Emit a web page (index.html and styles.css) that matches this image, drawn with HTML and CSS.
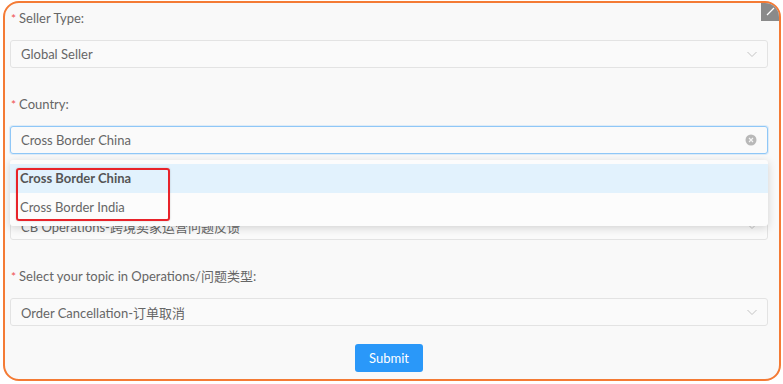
FILE: index.html
```html
<!DOCTYPE html>
<html lang="en">
<head>
    <meta charset="UTF-8">
    <meta name="viewport" content="width=device-width, initial-scale=1.0">
    <title>Operations Form</title>
    <link rel="stylesheet" href="styles.css">
</head>
<body>
    <div class="frame">
        <span class="corner-badge">
            <svg width="18" height="18" viewBox="0 0 18 18"><path d="M6 12 L13 5" stroke="#fff" stroke-width="1.2"/></svg>
        </span>
        <form class="form">
            <div class="form-item">
                <label class="form-label"><span class="req">*</span>Seller Type:</label>
                <div class="select">
                    <span class="select-value">Global Seller</span>
                    <svg class="arrow" width="12" height="12" viewBox="0 0 12 12"><path d="M1.5 4 L6 8.5 L10.5 4" fill="none" stroke="#c4c4c4" stroke-width="1"/></svg>
                </div>
            </div>
            <div class="form-item country">
                <label class="form-label"><span class="req">*</span>Country:</label>
                <div class="select focused">
                    <span class="select-value">Cross Border China</span>
                    <svg class="clear" width="12" height="12" viewBox="0 0 12 12"><circle cx="6" cy="6" r="5.5" fill="#b8b8b8"/><path d="M4 4 L8 8 M8 4 L4 8" stroke="#f4f4f4" stroke-width="1.2"/></svg>
                </div>
                <!-- dropdown of the country select -->
                <div class="dropdown">
                    <div class="option active">Cross Border China</div>
                    <div class="option">Cross Border India</div>
                    <div class="mark"></div>
                </div>
            </div>
            <div class="form-item">
                <label class="form-label"><span class="req">*</span>Business Line/业务类型:</label>
                <div class="select">
                    <span class="select-value">CB Operations-跨境卖家运营问题反馈</span>
                    <svg class="arrow" width="12" height="12" viewBox="0 0 12 12"><path d="M1.5 4 L6 8.5 L10.5 4" fill="none" stroke="#c4c4c4" stroke-width="1"/></svg>
                </div>
            </div>
            <div class="form-item">
                <label class="form-label"><span class="req">*</span>Select your topic in Operations/问题类型:</label>
                <div class="select">
                    <span class="select-value">Order Cancellation-订单取消</span>
                    <svg class="arrow" width="12" height="12" viewBox="0 0 12 12"><path d="M1.5 4 L6 8.5 L10.5 4" fill="none" stroke="#c4c4c4" stroke-width="1"/></svg>
                </div>
            </div>
            <div class="actions">
                <button type="button" class="submit-button">Submit</button>
            </div>
        </form>
    </div>
</body>
</html>
```

FILE: styles.css
```css
body {
    margin: 0;
    background: #ffffff;
    font-family: Lato, "Noto Sans CJK SC", sans-serif;
    font-size: 13px;
    color: #666;
}
.frame {
    position: relative;
    margin: 1px 2px 0 3px;
    height: 373px;
    border: 2px solid #f47b35;
    border-radius: 16px;
    background: #f9f9f9;
    overflow: hidden;
    padding: 3px 11px 0 5px;
}
.corner-badge {
    position: absolute;
    top: 0;
    right: 0;
    width: 18px;
    height: 18px;
    background: #8a8a8a;
}
.corner-badge svg {
    display: block;
}
.form-item {
    margin-bottom: 24px;
}
.form-item.country {
    position: relative;
}
.form-label {
    display: block;
    height: 24px;
    line-height: 24px;
    margin-bottom: 10px;
    color: #666;
}
.req {
    color: #f05050;
    font-size: 12px;
    margin: 0 3px 0 1px;
}
.select {
    position: relative;
    display: flex;
    align-items: center;
    justify-content: space-between;
    height: 28px;
    box-sizing: border-box;
    padding: 0 9px 0 10px;
    border: 1px solid #e3e3e3;
    border-radius: 3px;
    background: #fafafa;
    color: #666;
}
.select.focused {
    border-color: #8fc7f7;
    box-shadow: 0 0 0 1px rgba(143, 199, 247, 0.25);
}
.arrow,
.clear {
    display: block;
}
.clear {
    margin-right: 1px;
}
.dropdown {
    position: absolute;
    z-index: 2;
    left: 0;
    right: 0;
    top: 68px;
    padding: 4px 0;
    background: #fcfcfc;
    border-radius: 3px;
    box-shadow: 0 2px 8px rgba(0, 0, 0, 0.16);
}
.option {
    height: 29px;
    line-height: 29px;
    padding-left: 10px;
    color: #666;
}
.option.active {
    background: #e2f2fd;
    font-weight: 700;
    color: #555;
}
.mark {
    position: absolute;
    left: 6px;
    top: 8px;
    width: 154px;
    height: 53px;
    box-sizing: border-box;
    border: 2px solid #e8232a;
    border-radius: 3px;
    box-shadow: 0 0 2px rgba(0, 0, 0, 0.2);
}
.actions {
    display: flex;
    justify-content: center;
    margin-top: -6px;
}
.submit-button {
    width: 68px;
    height: 28px;
    border: none;
    border-radius: 3px;
    background: #2a98f9;
    color: #fff;
    font-family: Lato, sans-serif;
    font-size: 13px;
    cursor: pointer;
}
```
